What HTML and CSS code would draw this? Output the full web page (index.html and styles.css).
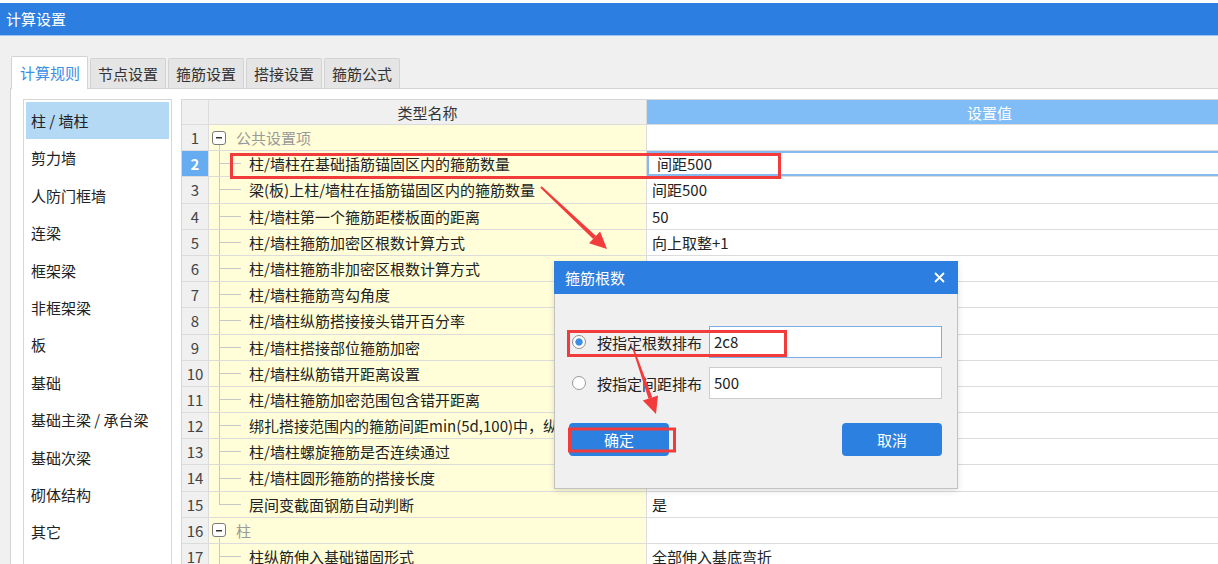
FILE: index.html
```html
<!DOCTYPE html>
<html lang="zh-CN">
<head>
<meta charset="utf-8">
<title>计算设置</title>
<link rel="stylesheet" href="styles.css">
</head>
<body>
<div class="topstrip"></div>
<header class="titlebar">计算设置</header>
<div class="main">
  <nav class="tabs">
    <div class="tab active">计算规则</div>
    <div class="tab">节点设置</div>
    <div class="tab">箍筋设置</div>
    <div class="tab">搭接设置</div>
    <div class="tab">箍筋公式</div>
  </nav>
  <section class="panel">
    <ul class="sidebar">
      <li class="item selected">柱 / 墙柱</li>
      <li class="item">剪力墙</li>
      <li class="item">人防门框墙</li>
      <li class="item">连梁</li>
      <li class="item">框架梁</li>
      <li class="item">非框架梁</li>
      <li class="item">板</li>
      <li class="item">基础</li>
      <li class="item">基础主梁 / 承台梁</li>
      <li class="item">基础次梁</li>
      <li class="item">砌体结构</li>
      <li class="item">其它</li>
    </ul>
    <div class="grid">
      <div class="row head"><div class="num"></div><div class="name">类型名称</div><div class="val">设置值</div></div>
      <div class="row"><div class="num">1</div><div class="name group"><span class="toggle"></span><span class="gtext">公共设置项</span></div><div class="val"></div></div>
      <div class="row"><div class="num current">2</div><div class="name child">柱/墙柱在基础插筋锚固区内的箍筋数量</div><div class="val editing">间距500</div></div>
      <div class="row"><div class="num">3</div><div class="name child">梁(板)上柱/墙柱在插筋锚固区内的箍筋数量</div><div class="val">间距500</div></div>
      <div class="row"><div class="num">4</div><div class="name child">柱/墙柱第一个箍筋距楼板面的距离</div><div class="val">50</div></div>
      <div class="row"><div class="num">5</div><div class="name child">柱/墙柱箍筋加密区根数计算方式</div><div class="val">向上取整+1</div></div>
      <div class="row"><div class="num">6</div><div class="name child">柱/墙柱箍筋非加密区根数计算方式</div><div class="val">向上取整-1</div></div>
      <div class="row"><div class="num">7</div><div class="name child">柱/墙柱箍筋弯勾角度</div><div class="val">135°</div></div>
      <div class="row"><div class="num">8</div><div class="name child">柱/墙柱纵筋搭接接头错开百分率</div><div class="val">50%</div></div>
      <div class="row"><div class="num">9</div><div class="name child">柱/墙柱搭接部位箍筋加密</div><div class="val">是</div></div>
      <div class="row"><div class="num">10</div><div class="name child">柱/墙柱纵筋错开距离设置</div><div class="val">按规范计算</div></div>
      <div class="row"><div class="num">11</div><div class="name child">柱/墙柱箍筋加密范围包含错开距离</div><div class="val">是</div></div>
      <div class="row"><div class="num">12</div><div class="name child">绑扎搭接范围内的箍筋间距min(5d,100)中，纵筋d的取值</div><div class="val">上下层最小直径</div></div>
      <div class="row"><div class="num">13</div><div class="name child">柱/墙柱螺旋箍筋是否连续通过</div><div class="val">是</div></div>
      <div class="row"><div class="num">14</div><div class="name child">柱/墙柱圆形箍筋的搭接长度</div><div class="val">max(lae,300)</div></div>
      <div class="row"><div class="num">15</div><div class="name child last">层间变截面钢筋自动判断</div><div class="val">是</div></div>
      <div class="row"><div class="num">16</div><div class="name group"><span class="toggle"></span><span class="gtext">柱</span></div><div class="val"></div></div>
      <div class="row"><div class="num">17</div><div class="name child">柱纵筋伸入基础锚固形式</div><div class="val">全部伸入基底弯折</div></div>
    </div>
  </section>
</div>

<div class="dialog">
  <div class="dlg-title">
    <span>箍筋根数</span>
    <svg class="close" width="11" height="11" viewBox="0 0 11 11"><path d="M1 1L10 10M10 1L1 10" stroke="#fff" stroke-width="1.8" fill="none"/></svg>
  </div>
  <div class="dlg-body">
    <div class="opt"><span class="radio on"></span><span class="label">按指定根数排布</span><div class="input focus">2c8</div></div>
    <div class="opt"><span class="radio"></span><span class="label">按指定间距排布</span><div class="input">500</div></div>
    <div class="actions"><div class="btn">确定</div><div class="btn">取消</div></div>
  </div>
</div>

<svg class="marks" width="1218" height="564" viewBox="0 0 1218 564">
  <g fill="none" stroke="#f23b3b" stroke-width="3">
    <rect x="231.5" y="154.5" width="548" height="23"/>
    <rect x="568.5" y="331.5" width="217" height="24"/>
    <rect x="569.5" y="429" width="105" height="22"/>
  </g>
  <g fill="#f23b3b">
    <polygon points="540.3,187.7 541.7,186.3 596.0,235.9 593.2,238.9"/>
    <polygon points="589.1,243.2 607,249 600.1,231.6"/>
    <polygon points="632.3,348.2 633.7,347.8 652.3,397.3 648.5,398.7"/>
    <polygon points="642.8,400.6 656,414 658.0,395.4"/>
  </g>
</svg>
</body>
</html>
```

FILE: styles.css
```css
* { box-sizing: border-box; }
html, body { margin: 0; padding: 0; }
body {
  width: 1218px;
  height: 564px;
  overflow: hidden;
  position: relative;
  background: #f0f0f0;
  font-family: "Noto Sans CJK SC", "Noto Sans", sans-serif;
  font-size: 15px;
  color: #222;
}
.topstrip { height: 3px; background: #fff; }
.titlebar {
  height: 33px;
  background: #2c7fe0;
  color: #fff;
  padding-left: 6px;
  line-height: 32px;
  border-bottom: 1px solid #9cc6f2;
}
.main { padding-left: 10px; overflow: hidden; height: 528px; }
.tabs {
  display: flex;
  align-items: flex-end;
  gap: 2px;
  height: 52px;
  padding-left: 1px;
}
.tab {
  height: 30px;
  padding: 0 7px;
  background: #e5e5e5;
  border: 1px solid #d3d3d3;
  border-bottom: none;
  border-radius: 2px 2px 0 0;
  line-height: 29px;
  color: #333;
}
.tab.active {
  height: 33px;
  padding: 0 7px 0 8px;
  background: #fff;
  color: #3b8de6;
  margin-bottom: -1px;
  position: relative;
  z-index: 1;
  line-height: 32px;
}
.panel {
  display: flex;
  align-items: flex-start;
  background: #fff;
  border-top: 1px solid #d3d3d3;
  border-left: 1px solid #d3d3d3;
  padding: 10px 0 0 12px;
  height: 476px;
  overflow: hidden;
}
.sidebar {
  list-style: none;
  margin: 0;
  padding: 2px;
  width: 149px;
  height: 480px;
  border: 1px solid #d6d6d6;
  flex: none;
}
.item { height: 37.4px; line-height: 37.4px; padding-left: 5px; white-space: nowrap; }
.item.selected { background: #b4d9f4; }

.grid {
  margin-left: 9px;
  border-top: 1px solid #d6d6d6;
  border-left: 1px solid #d6d6d6;
  flex: 1;
  min-width: 0;
  overflow: hidden;
}
.row {
  display: grid;
  grid-template-columns: 27px 438px 686px;
  height: 26.2px;
}
.row > div {
  border-right: 1px solid #dcdcdc;
  border-bottom: 1px solid #dcdcdc;
  line-height: 25px;
  white-space: nowrap;
  overflow: hidden;
}
.row.head { height: 25px; }
.head .num, .head .name { background: #f0f0f0; }
.head .name { text-align: center; color: #333; padding-left: 0; }
.head .val { background: #80bcf6; color: #fff; text-align: center; padding-left: 0; }
.num { background: #f0f0f0; text-align: center; color: #444; }
.num.current { background: #66acf0; color: #fff; font-weight: bold; }
.name { background: #fffed8; padding-left: 40px; }
.name.child {
  background:
    linear-gradient(#c8c8c8, #c8c8c8) 10px 0 / 1px 100% no-repeat,
    linear-gradient(#c8c8c8, #c8c8c8) 10px 50% / 22px 1px no-repeat,
    #fffed8;
}
.name.child.last {
  background:
    linear-gradient(#c8c8c8, #c8c8c8) 10px 0 / 1px 50% no-repeat,
    linear-gradient(#c8c8c8, #c8c8c8) 10px 50% / 22px 1px no-repeat,
    #fffed8;
}
.name.group {
  padding-left: 3px;
  display: flex;
  align-items: center;
  background:
    linear-gradient(#c8c8c8, #c8c8c8) 10px 100% / 1px 5px no-repeat,
    #fffed8;
}
.toggle {
  width: 14px;
  height: 14px;
  border: 1px solid #7a7a7a;
  border-radius: 3px;
  background: linear-gradient(#333, #333) center / 6px 1.5px no-repeat, #fff;
  flex: none;
}
.gtext { margin-left: 10px; color: #9a9a9a; }
.val { background: #fff; padding-left: 5px; }
.val.editing {
  box-shadow: inset 0 0 0 2px #86b9ee;
  padding-left: 10px;
}

.dialog {
  position: absolute;
  left: 554px;
  top: 261px;
  width: 404px;
  height: 228px;
  background: #f0f0f0;
  border: 1px solid #c2c2c2;
  border-top: none;
  box-shadow: 0 2px 6px rgba(0, 0, 0, 0.12);
}
.dlg-title {
  height: 33px;
  margin: 0 -1px;
  background: #2c7fe0;
  color: #fff;
  display: flex;
  align-items: center;
  justify-content: space-between;
  padding: 0 13px 0 11px;
}
.close { display: block; }
.dlg-body { padding: 32px 15px 0 14px; }
.opt { display: flex; align-items: center; height: 32px; }
.opt + .opt { margin-top: 9px; }
.radio {
  width: 14px;
  height: 14px;
  border-radius: 50%;
  border: 1px solid #9a9a9a;
  background: #fff;
  margin-left: 3px;
  margin-right: 11px;
  flex: none;
}
.radio.on {
  border-color: #8e8e8e;
  background: radial-gradient(circle, #3a8ee6 0 3.3px, #fff 4px);
}
.label { width: 112px; white-space: nowrap; }
.input {
  width: 233px;
  height: 32px;
  border: 1px solid #cdcdcd;
  background: #fff;
  padding-left: 4px;
  line-height: 30px;
}
.input.focus { border-color: #7aaee6; }
.actions { display: flex; justify-content: space-between; margin-top: 24px; }
.btn {
  width: 100px;
  height: 33px;
  border-radius: 4px;
  background: #2c80e0;
  color: #fff;
  text-align: center;
  line-height: 33px;
}
.marks { position: absolute; left: 0; top: 0; pointer-events: none; }
```
